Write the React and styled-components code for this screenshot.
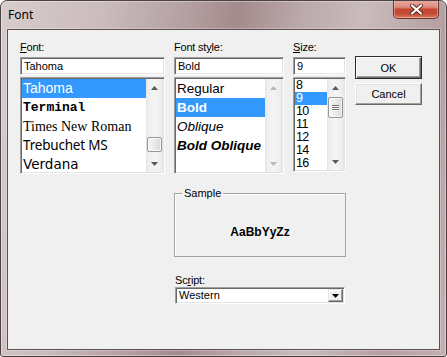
import React from "react";
import styled, { createGlobalStyle, css } from "styled-components";

const GlobalStyle = createGlobalStyle`
  html, body {
    margin: 0;
    padding: 0;
    background: #ffffff;
  }
  body {
    font-family: "Liberation Sans", Arial, sans-serif;
  }
  * {
    box-sizing: border-box;
  }
`;

const sunken = css`
  border: 1px solid;
  border-color: #a0a0a0 #ffffff #ffffff #a0a0a0;
  box-shadow: inset 1px 1px 0 #696969, inset -1px -1px 0 #e3e3e3;
  padding: 1px;
  background: #ffffff;
`;

const Window = styled.div`
  width: 447px;
  height: 357px;
  display: flex;
  flex-direction: column;
  border: 1px solid #4d4143;
  border-radius: 7px 7px 3px 3px;
  background: linear-gradient(
    100deg,
    #d8cccd 0%,
    #cbbcbd 20%,
    #b5a1a3 36%,
    #a38b8d 47%,
    #bba9ab 60%,
    #cabbbc 72%,
    #b49fa1 88%,
    #c3b2b3 100%
  );
  box-shadow: inset 0 0 0 1px rgba(255, 255, 255, 0.35);
  overflow: hidden;
`;

const TitleBar = styled.div`
  height: 28px;
  flex: none;
  display: flex;
  justify-content: space-between;
  align-items: flex-start;
  padding: 0 7px;
`;

const Title = styled.span`
  margin-top: 7px;
  font-family: "Noto Sans", "Open Sans", sans-serif;
  font-size: 12px;
  line-height: 14px;
  color: #000;
`;

const CloseButton = styled.div`
  width: 46px;
  height: 19px;
  margin-top: -1px;
  display: flex;
  align-items: center;
  justify-content: center;
  border: 1px solid #6b3530;
  border-top: none;
  border-radius: 0 0 5px 5px;
  background: linear-gradient(
    180deg,
    #e7aca0 0%,
    #da8b7c 40%,
    #c4452f 52%,
    #c24a34 75%,
    #dc7a5c 100%
  );
  box-shadow: inset 0 0 0 1px rgba(255, 220, 210, 0.45);
`;

const Client = styled.div`
  flex: 1;
  margin: 0 6px 6px;
  border: 1px solid #5e5052;
  background: #f0f0f0;
  box-shadow: 0 0 0 1px rgba(255, 255, 255, 0.25);
`;

const Layout = styled.div`
  display: grid;
  grid-template-columns: 145px 110px 53px 67px;
  column-gap: 9px;
  align-items: start;
  padding: 10px 0 0 12px;
`;

const Column = styled.div`
  display: flex;
  flex-direction: column;
`;

const Label = styled.div`
  height: 14px;
  margin-bottom: 3px;
  font-size: 11px;
  line-height: 14px;
  letter-spacing: -0.2px;
  color: #000;
  white-space: nowrap;

  u {
    text-decoration: underline;
    text-underline-offset: 1px;
  }
`;

const TextInput = styled.div`
  ${sunken};
  height: 18px;
  margin-bottom: 2px;
  padding: 0 3px;
  font-size: 11px;
  line-height: 16px;
  color: #000;
`;

const ListBox = styled.div`
  ${sunken};
  height: ${(p) => p.$height}px;
  display: flex;
  overflow: hidden;
`;

const Items = styled.div`
  flex: 1;
  min-width: 0;
  overflow: hidden;
`;

const Item = styled.div`
  height: ${(p) => p.$h}px;
  line-height: ${(p) => p.$h}px;
  padding-left: 1px;
  font-family: ${(p) => p.$font};
  font-size: ${(p) => p.$size}px;
  font-weight: ${(p) => (p.$bold ? 700 : 400)};
  font-style: ${(p) => (p.$italic ? "italic" : "normal")};
  letter-spacing: ${(p) => p.$spacing || 0}px;
  white-space: nowrap;
  color: ${(p) => (p.$selected ? "#ffffff" : "#000000")};
  background: ${(p) => (p.$selected ? "#3399ff" : "transparent")};
`;

const ScrollBar = styled.div`
  width: 17px;
  flex: none;
  display: flex;
  flex-direction: column;
  background: linear-gradient(
    90deg,
    #e3e3e3 0,
    #eeeeee 2px,
    #f4f4f4 50%,
    #eeeeee calc(100% - 2px),
    #e3e3e3 100%
  );
`;

const Arrow = styled.div`
  height: 17px;
  flex: none;
  display: flex;
  align-items: center;
  justify-content: center;
`;

const Track = styled.div`
  flex: 1;
  padding: ${(p) => p.$offset}px 1px 0;
`;

const Thumb = styled.div`
  height: ${(p) => p.$h}px;
  display: flex;
  flex-direction: column;
  align-items: center;
  justify-content: center;
  gap: 1px;
  border: 1px solid #979797;
  border-radius: 2px;
  background: linear-gradient(90deg, #f6f6f6 0%, #ececec 45%, #d9d9d9 100%);
  box-shadow: inset 0 0 0 1px rgba(255, 255, 255, 0.7);
`;

const Grip = styled.span`
  width: 7px;
  height: 1px;
  background: #6f6f6f;
  box-shadow: 0 1px 0 #ffffff;
`;

const ButtonColumn = styled.div`
  display: flex;
  flex-direction: column;
  gap: 4px;
  padding-top: 16px;
`;

const Button = styled.div`
  width: 67px;
  height: ${(p) => (p.$default ? 23 : 22)}px;
  display: flex;
  align-items: center;
  justify-content: center;
  font-size: 11px;
  color: #000;
  background: #f0f0f0;
  border: 1px solid;
  border-color: #ffffff #696969 #696969 #ffffff;
  box-shadow: inset -1px -1px 0 #a0a0a0, inset 1px 1px 0 #e3e3e3;

  ${(p) =>
    p.$default &&
    css`
      border-color: #2b2b2b;
      box-shadow: inset 1px 1px 0 #ffffff, inset -1px -1px 0 #696969,
        inset -2px -2px 0 #a0a0a0;
    `}
`;

const GroupBox = styled.fieldset`
  grid-column: 2 / span 2;
  margin: 13px 0 0;
  padding: 0;
  min-width: 0;
  border: 1px solid #a3a3a3;
  box-shadow: inset 1px 1px 0 #ffffff;
`;

const Legend = styled.legend`
  margin-left: 7px;
  padding: 0 2px;
  font-size: 11px;
  line-height: 13px;
  color: #000;
`;

const SampleArea = styled.div`
  height: 56px;
  padding-top: 8px;
  display: flex;
  align-items: center;
  justify-content: center;
  font-size: 12px;
  font-weight: 700;
  color: #000;
`;

const ScriptBlock = styled.div`
  grid-column: 2 / span 2;
  margin-top: 16px;
  display: flex;
  flex-direction: column;

  ${Label} {
    margin-bottom: 0;
    padding-left: 1px;
  }
`;

const ComboBox = styled.div`
  ${sunken};
  width: 170px;
  height: 17px;
  margin-left: 1px;
  display: flex;
  align-items: stretch;
`;

const ComboText = styled.span`
  flex: 1;
  padding-left: 2px;
  font-size: 11px;
  line-height: 13px;
  color: #000;
`;

const ComboButton = styled.span`
  width: 15px;
  display: flex;
  align-items: center;
  justify-content: center;
  background: #f0f0f0;
  border: 1px solid;
  border-color: #e3e3e3 #696969 #696969 #e3e3e3;
  box-shadow: inset -1px -1px 0 #a0a0a0, inset 1px 1px 0 #ffffff;
`;

const Triangle = ({ down, color, w = 7, h = 4 }) => (
  <svg width={w} height={h} viewBox={`0 0 ${w} ${h}`}>
    <polygon
      points={down ? `0,0 ${w},0 ${w / 2},${h}` : `0,${h} ${w},${h} ${w / 2},0`}
      fill={color}
    />
  </svg>
);

const Scroller = ({ thumb, offset, grip, disabled }) => {
  const color = disabled ? "#b8b8b8" : "#5a5a5a";
  return (
    <ScrollBar>
      <Arrow>
        <Triangle color={color} />
      </Arrow>
      <Track $offset={offset}>
        {thumb && (
          <Thumb $h={thumb}>
            {grip && (
              <>
                <Grip />
                <Grip />
                <Grip />
              </>
            )}
          </Thumb>
        )}
      </Track>
      <Arrow>
        <Triangle down color={color} />
      </Arrow>
    </ScrollBar>
  );
};

const fonts = [
  { name: "Tahoma", font: '"Liberation Sans", sans-serif', size: 14, selected: true },
  { name: "Terminal", font: '"Liberation Mono", monospace', size: 13, bold: true },
  { name: "Times New Roman", font: '"Liberation Serif", serif', size: 14 },
  { name: "Trebuchet MS", font: '"Noto Sans", sans-serif', size: 13.5, spacing: -0.2 },
  { name: "Verdana", font: '"DejaVu Sans", sans-serif', size: 13.5 },
];

const styles = [
  { name: "Regular" },
  { name: "Bold", bold: true, selected: true },
  { name: "Oblique", italic: true },
  { name: "Bold Oblique", bold: true, italic: true },
];

const sizes = ["8", "9", "10", "11", "12", "14", "16"];

const App = () => (
  <>
    <GlobalStyle />
    <Window>
      <TitleBar>
        <Title>Font</Title>
        <CloseButton>
          <svg width="13" height="11" viewBox="0 0 13 11">
            <path d="M2 1.5 L11 9.5 M11 1.5 L2 9.5" stroke="#5a2620" strokeWidth="4" strokeLinecap="round" />
            <path d="M2 1.5 L11 9.5 M11 1.5 L2 9.5" stroke="#ffffff" strokeWidth="2.2" strokeLinecap="round" />
          </svg>
        </CloseButton>
      </TitleBar>

      <Client>
        <Layout>
          <Column>
            <Label>
              <u>F</u>ont:
            </Label>
            <TextInput>Tahoma</TextInput>
            <ListBox $height={97}>
              <Items>
                {fonts.map((f) => (
                  <Item
                    key={f.name}
                    $h={19}
                    $font={f.font}
                    $size={f.size}
                    $bold={f.bold}
                    $spacing={f.spacing}
                    $selected={f.selected}
                  >
                    {f.name}
                  </Item>
                ))}
              </Items>
              <Scroller thumb={15} offset={41} />
            </ListBox>
          </Column>

          <Column>
            <Label>
              Font st<u>y</u>le:
            </Label>
            <TextInput>Bold</TextInput>
            <ListBox $height={97}>
              <Items>
                {styles.map((s) => (
                  <Item
                    key={s.name}
                    $h={19}
                    $font='"Liberation Sans", sans-serif'
                    $size={13.5}
                    $bold={s.bold}
                    $italic={s.italic}
                    $selected={s.selected}
                  >
                    {s.name}
                  </Item>
                ))}
              </Items>
              <Scroller disabled offset={0} />
            </ListBox>
          </Column>

          <Column>
            <Label>
              <u>S</u>ize:
            </Label>
            <TextInput>9</TextInput>
            <ListBox $height={95}>
              <Items>
                {sizes.map((s) => (
                  <Item
                    key={s}
                    $h={13}
                    $font='"Liberation Sans", sans-serif'
                    $size={12.5}
                    $spacing={-0.6}
                    $selected={s === "9"}
                  >
                    {s}
                  </Item>
                ))}
              </Items>
              <Scroller thumb={21} offset={1} grip />
            </ListBox>
          </Column>

          <ButtonColumn>
            <Button $default>OK</Button>
            <Button>Cancel</Button>
          </ButtonColumn>

          <GroupBox>
            <Legend>Sample</Legend>
            <SampleArea>AaBbYyZz</SampleArea>
          </GroupBox>

          <ScriptBlock>
            <Label>
              Sc<u>r</u>ipt:
            </Label>
            <ComboBox>
              <ComboText>Western</ComboText>
              <ComboButton>
                <Triangle down color="#000" w={7} h={4} />
              </ComboButton>
            </ComboBox>
          </ScriptBlock>
        </Layout>
      </Client>
    </Window>
  </>
);

export default App;
